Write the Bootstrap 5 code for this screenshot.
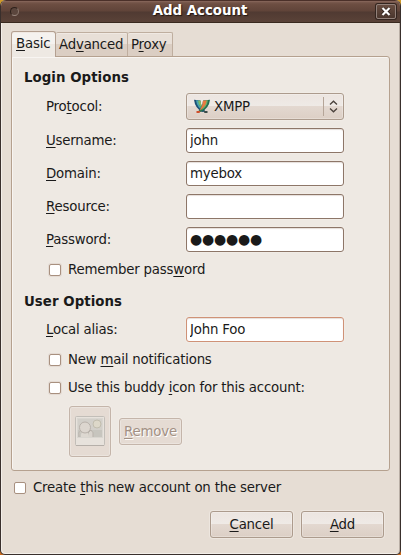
<!DOCTYPE html>
<html lang="en">
<head>
<meta charset="utf-8">
<meta name="viewport" content="width=device-width, initial-scale=1">
<title>Add Account</title>
<link rel="stylesheet" href="https://cdn.jsdelivr.net/npm/bootstrap@5.3.0/dist/css/bootstrap.min.css">
<style>
html { background: linear-gradient(90deg, #c8791f, #dba52a); }
body { background: linear-gradient(#d09a2a, #c8691c); font-family: "DejaVu Sans", sans-serif; font-size: 13.33px; letter-spacing: -.2px; line-height: 18px; color: #1a1a1a; height: 555px; overflow: hidden; }
u { text-underline-offset: 2px; text-decoration-thickness: 1px; text-decoration-skip-ink: none; }
.dialog { width: 401px; height: 555px; background: #e6ddd4; border: solid #392f2c; border-width: 0 1px 1px; border-radius: 6px 6px 5px 5px; box-shadow: inset 1px -1px #f3eee9, inset -1px 0 #b9aea5; overflow: hidden; }
.titlebar { height: 23px; background: linear-gradient(#4b3029 0, #4b3029 1px, #8d6c60 1px, #7a5a4e 2px, #6d4e42 4px, #604439 11px, #503a32 12px, #5a4238 22px, #39291f 22px); color: #fff; font-weight: bold; letter-spacing: 0; text-shadow: 1px 1px 1px #201510; }
.title { padding: 0 0 2px 5px; }
.orb { width: 9px; height: 9px; flex: none; border-radius: 50%; background: #5b463d; border: 1px solid; border-color: #2d201b #8b786e #97857c #2d201b; margin-left: 9px; }
.close-btn { width: 20px; height: 15px; border: 1px solid #92817a; border-radius: 2px; background: linear-gradient(#684d41, #4b372e); box-shadow: 0 0 0 1px #33251f; margin: 0 4px 0 0; padding: 0; }
.tabs { height: 26px; margin: 8px 0 0 10px; position: relative; z-index: 1; }
.tab { border: 1px solid #bfae9f; border-bottom: 0; border-left: 0; height: 24px; margin-top: 1px; padding: 3px 0 0 3px; background: linear-gradient(#e8dfd7 50%, #dbcec3 50%); border-radius: 2px 2px 0 0; white-space: nowrap; box-shadow: inset 0 1px #f0e9e3; }
.tab.active { width: 45px; height: 26px; margin-top: 0; padding: 3px 0 0 4px; border: 1px solid #b4a091; border-bottom: 0; background: linear-gradient(#f5f2ef 50%, #eee9e3 50%); border-radius: 3px 3px 0 0; }
.tab-advanced { width: 72px; }
.tab-proxy { width: 45px; }
.panel { width: 379px; height: 415px; margin: -1px 0 0 10px; border: 1px solid #b5a18f; border-radius: 0 3px 3px 3px; background: #eee9e3; box-shadow: inset 1px 1px #f8f5f2; padding: 11px 0 0 12px; }
.section { font-weight: bold; font-size: 13.33px; letter-spacing: .05px; line-height: 20px; margin: 0; height: 25px; }
.fieldrow { padding-left: 22px; height: 25px; margin-bottom: 8px; }
.fieldrow > label { width: 140px; }
.combo-line { height: 27px; }
.entry { width: 158px; height: 25px; border: 1px solid #8d7668; border-radius: 3px; background: #fff; box-shadow: 0 0 0 1px #f1ece6, inset 0 1px 1px #e5deda; padding: 1px 3px; font-size: 13.33px; letter-spacing: -.2px; line-height: 18px; color: #1a1a1a; }
.entry:focus { outline: 0; }
.entry.warm { border-color: #cf9277; }
.entry.dots { font-size: 14px; letter-spacing: -.2px; padding: 0 3px 1px; }
.gbtn { border: 1px solid #ac9b8d; border-radius: 3px; color: #1a1a1a; background: linear-gradient(#ece5e0, #efeae6 49%, #e3d8d0 50%, #dccfc5); box-shadow: inset 0 0 0 1px rgba(255,255,255,.25), 0 0 0 1px rgba(244,239,234,.5); font-size: 13.33px; letter-spacing: -.2px; line-height: 18px; padding: 1px 0 0; }
.combo { width: 158px; height: 27px; padding: 0; }
.combo svg:first-child { margin-left: 7px; }
.combo-sep { width: 1px; height: 19px; background: #b5a598; }
.tick { appearance: none; width: 12px; height: 12px; margin: 0 7px 0 0; border: 1px solid #a8907f; border-radius: 2px; background: #fff; box-shadow: 0 0 0 1px #e4dbd4; flex: none; }
.checkrow { height: 18px; padding-left: 25px; }
.remember { margin-top: 9px; }
.user-section { height: 20px; margin: 13px 0 5px; }
.user-section + .fieldrow { margin-bottom: 9px; }
.buddy { margin-top: 10px; }
.icons { margin: 9px 0 0 45px; gap: 8px; }
.dim { background: #e5dbd3; border-color: #c4b5aa; color: #a29084; text-shadow: 1px 1px #fff; }
.avatar { width: 42px; height: 51px; padding: 0; }
.remove { width: 63px; height: 27px; }
.create { height: 18px; margin: 8px 0 0 13px; }
.actions { gap: 8px; margin: 14px 16px 0 0; }
.act { width: 83px; height: 27px; }
</style>
</head>
<body>
<main class="dialog">
  <header class="titlebar d-flex align-items-center justify-content-between">
    <span class="orb"></span>
    <span class="title flex-fill text-center">Add Account</span>
    <button class="close-btn d-flex align-items-center justify-content-center" aria-label="Close">
      <svg width="10" height="9" viewBox="0 0 10 9"><path d="M1.5 1.2 8.5 7.8M8.5 1.2 1.5 7.8" stroke="#251a15" stroke-width="3.4"/><path d="M1.5 1 8.5 8M8.5 1 1.5 8" stroke="#fff" stroke-width="2.2"/></svg>
    </button>
  </header>

  <nav class="tabs d-flex">
    <div class="tab active"><u>B</u>asic</div>
    <div class="tab tab-advanced">Ad<u>v</u>anced</div>
    <div class="tab tab-proxy">P<u>r</u>oxy</div>
  </nav>

  <section class="panel">
    <h2 class="section">Login Options</h2>
    <div class="fieldrow combo-line d-flex align-items-center">
      <label>Pro<u>t</u>ocol:</label>
      <button class="gbtn combo d-flex align-items-center">
        <svg width="16" height="15" viewBox="0 0 16 15">
          <path d="M0 .8 6.5 1.5Q7 8 11.5 12.5L8.5 13Q1 9.500 0 .8Z" fill="#1b4f76"/>
          <path d="M2 1.2 4.5 1.5Q5 7.5 9.5 12Q3 8.5 2 1.2Z" fill="#48a5ae"/>
          <path d="M4 1.5 6.7 1.7Q7 7.5 10.5 11.5Q5 8 4 1.5Z" fill="#7fbd64"/>
          <path d="M16 .8 9 1.5Q8.5 8 4 12.5L7 13Q15 9.5 16 .8Z" fill="#236b50"/>
          <path d="M14 1.2 11.5 1.5Q11 7.5 6 12Q13 8.5 14 1.2Z" fill="#6ab267"/>
          <path d="M12.7 1.3 9 1.7Q8.7 7.5 5 11.7Q11.7 8.5 12.7 1.3Z" fill="#e9793f"/>
          <path d="M2.5 12H6.5L5.5 14H2.5Z" fill="#cf502d"/>
          <path d="M13.5 12H9.5L10.5 14H13.5Z" fill="#3d4c4a"/>
        </svg>
        <span class="flex-fill text-start ps-1">XMPP</span>
        <span class="combo-sep"></span>
        <svg width="19" height="13" viewBox="0 0 19 13"><path d="M6 4.5 9.5 1.2 13 4.5M6 8.5 9.5 11.8 13 8.5" fill="none" stroke="#4a413b" stroke-width="1.3"/></svg>
      </button>
    </div>
    <div class="fieldrow d-flex align-items-center"><label for="user"><u>U</u>sername:</label><input id="user" class="entry" value="john"></div>
    <div class="fieldrow d-flex align-items-center"><label for="dom"><u>D</u>omain:</label><input id="dom" class="entry" value="myebox"></div>
    <div class="fieldrow d-flex align-items-center"><label for="res"><u>R</u>esource:</label><input id="res" class="entry"></div>
    <div class="fieldrow d-flex align-items-center"><label for="pass"><u>P</u>assword:</label><input id="pass" class="entry dots" value="●●●●●●"></div>
    <label class="checkrow remember d-flex align-items-center"><input type="checkbox" class="tick"><span>Remember pass<u>w</u>ord</span></label>
    <h2 class="section user-section">User Options</h2>
    <div class="fieldrow d-flex align-items-center"><label for="alias"><u>L</u>ocal alias:</label><input id="alias" class="entry warm" value="John Foo"></div>
    <label class="checkrow d-flex align-items-center"><input type="checkbox" class="tick"><span>New <u>m</u>ail notifications</span></label>
    <label class="checkrow buddy d-flex align-items-center"><input type="checkbox" class="tick"><span>Use this buddy <u>i</u>con for this account:</span></label>
    <div class="icons d-flex align-items-center">
      <button class="gbtn dim avatar d-flex align-items-center justify-content-center" disabled aria-label="Buddy icon">
        <svg width="30" height="31" viewBox="0 0 30 31">
          <rect x=".5" y=".5" width="29" height="29" rx="1" fill="#e7e2dc" stroke="#c2beb8"/>
          <rect x="2.5" y="2.5" width="25" height="19" fill="#d2cfc9" stroke="#d9d6d0"/>
          <path d="M3 14H27V21H3Z" fill="#c7c5be"/>
          <circle cx="22" cy="8" r="4" fill="#ddd8c9" stroke="#c1bdae"/>
          <path d="M4 21Q3 16 6 14M13 21V17L16 14Q19 16 18 21" fill="#d9d4cd" stroke="#b7b1aa"/>
          <path d="M6 21Q5 16 9.5 16Q14 16 14 21Z" fill="#ddd8d1"/>
          <circle cx="10" cy="11.5" r="5.5" fill="#dcd6cf" stroke="#b8b1aa"/>
          <path d="M1 29.5H29" stroke="#b5afa9"/>
        </svg>
      </button>
      <button class="gbtn dim remove" disabled><u>R</u>emove</button>
    </div>
  </section>

  <label class="create d-flex align-items-center"><input type="checkbox" class="tick"><span>Create <u>t</u>his new account on the server</span></label>
  <footer class="actions d-flex justify-content-end">
    <button class="gbtn act"><u>C</u>ancel</button>
    <button class="gbtn act"><u>A</u>dd</button>
  </footer>
</main>
<script src="https://cdn.jsdelivr.net/npm/bootstrap@5.3.0/dist/js/bootstrap.bundle.min.js"></script>
</body>
</html>
